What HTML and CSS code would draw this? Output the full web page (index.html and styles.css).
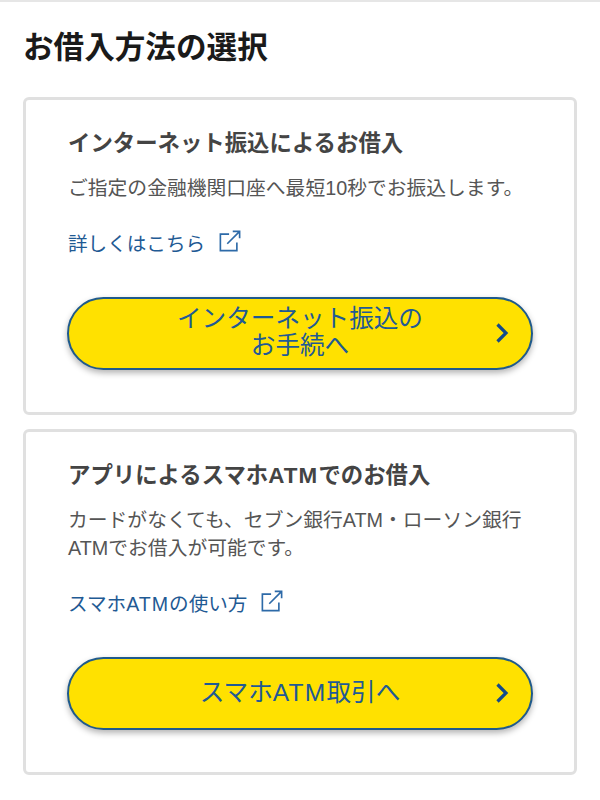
FILE: index.html
```html
<!DOCTYPE html>
<html lang="ja">

<head>
	<meta charset="UTF-8">
	<meta name="viewport" content="width=device-width, initial-scale=1.0">
	<title>お借入方法の選択</title>
	<link rel="stylesheet" href="styles.css">
</head>

<body>
	<h1 class="page-title">お借入方法の選択</h1>

	<section class="card">
		<h2 class="card-title">インターネット振込によるお借入</h2>
		<p class="card-text">ご指定の金融機関口座へ最短10秒でお振込します。</p>
		<a class="ext-link" href="#">詳しくはこちら
			<svg class="ext-icon" viewBox="0 0 24 24" aria-hidden="true">
				<path d="M11 4.500H1.500v18h18v-9M9 15L22.500 1.500M15 1.500h7.500V9"></path>
			</svg>
		</a>
		<a class="pill" href="#">
			<span class="pill-label">インターネット振込の<br>お手続へ</span>
			<svg class="pill-arrow" viewBox="0 0 14 22" aria-hidden="true">
				<path d="M2.500 2.500L11 11l-8.500 8.500"></path>
			</svg>
		</a>
	</section>

	<section class="card">
		<h2 class="card-title">アプリによるスマホ<span class="latin">ATM</span>でのお借入</h2>
		<p class="card-text">カードがなくても、セブン銀行ATM・ローソン銀行ATMでお借入が可能です。</p>
		<a class="ext-link" href="#"><span>スマホ<span class="latin">ATM</span>の使い方</span>
			<svg class="ext-icon" viewBox="0 0 24 24" aria-hidden="true">
				<path d="M11 4.500H1.500v18h18v-9M9 15L22.500 1.500M15 1.500h7.500V9"></path>
			</svg>
		</a>
		<a class="pill" href="#">
			<span class="pill-label">スマホ<span class="latin">ATM</span>取引へ</span>
			<svg class="pill-arrow" viewBox="0 0 14 22" aria-hidden="true">
				<path d="M2.500 2.500L11 11l-8.500 8.500"></path>
			</svg>
		</a>
	</section>
</body>

</html>
```

FILE: styles.css
```css
* {
	box-sizing: border-box;
}

body {
	margin: 0;
	padding: 0 23px;
	background: #fff;
	border-top: 2px solid #e6e6e6;
	font-family: "Liberation Sans", "Noto Sans CJK JP", sans-serif;
	color: #444;
}

.latin {
	letter-spacing: .05em;
}

.page-title {
	margin: 26px 0 31px;
	font-size: 30.600px;
	line-height: 38px;
	font-weight: 700;
	color: #1a1a1a;
}

.card {
	margin-bottom: 14px;
	padding: 29px 42px 42px;
	background: #fff;
	border: 3px solid #e0e0e0;
	border-radius: 6px;
}

.card-title {
	margin: 0 0 15px;
	font-size: 22.400px;
	line-height: 30px;
	font-weight: 700;
	color: #444;
}

.card-text {
	margin: 0;
	font-size: 19.800px;
	line-height: 28.500px;
	color: #555;
}

.ext-link {
	display: flex;
	align-items: center;
	gap: 14px;
	margin-top: 27px;
	font-size: 19.600px;
	line-height: 28px;
	color: #1f5a94;
	text-decoration: none;
}

.ext-icon {
	width: 22px;
	height: 22px;
	margin-top: -6px;
	fill: none;
	stroke: #2d6aa8;
	stroke-width: 1.800;
}

.pill {
	display: flex;
	align-items: center;
	justify-content: center;
	position: relative;
	height: 73px;
	margin: 39px -1px 0;
	padding: 0 64px 2px;
	background: #ffe100;
	border: 2px solid #1f5a8c;
	border-radius: 37px;
	box-shadow: 0 3px 6px rgba(0, 0, 0, .3);
	font-size: 24.600px;
	line-height: 27px;
	text-align: center;
	color: #1f5a94;
	text-decoration: none;
}

.pill-arrow {
	position: absolute;
	right: 22px;
	top: 50%;
	width: 14px;
	height: 22px;
	margin-top: -11px;
	fill: none;
	stroke: #134a8c;
	stroke-width: 3.200;
}
```
